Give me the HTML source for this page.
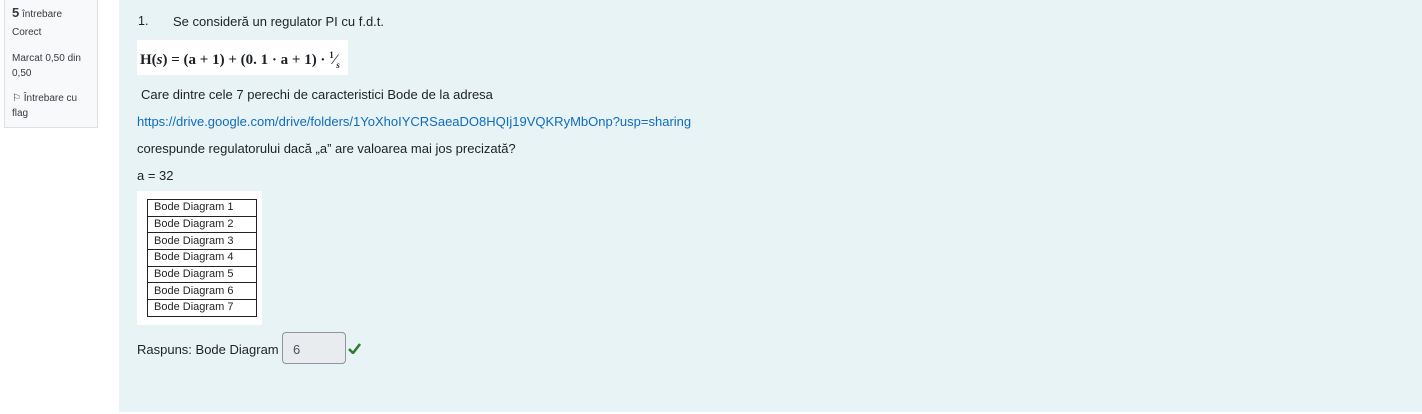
<!DOCTYPE html>
<html><head><meta charset="utf-8"><style>
body{margin:0;width:1422px;height:414px;background:#fff;font-family:"Liberation Sans",sans-serif;font-size:12.5px;color:#1d2125;position:relative;overflow:hidden}
.side{position:absolute;left:4px;top:-1px;width:92px;height:127px;background:#f8f9fa;border:1px solid #dee2e6;font-size:10px;color:#343a40}
.side div{position:absolute;left:7px}
.main{position:absolute;left:119px;top:0;width:1303px;height:412px;background:#e7f3f5}
.t{position:absolute;white-space:nowrap}
.img{position:absolute;background:#fff}
table{position:absolute;left:10px;top:8px;border-collapse:collapse;font-family:"Liberation Sans",sans-serif;font-size:11px;width:110px;table-layout:fixed}
td{border:1px solid #222;height:16.7px;padding:0 0 0 6px;line-height:15px;box-sizing:border-box;white-space:nowrap;overflow:hidden}
</style></head><body>
<div class="side">
<div style="top:5px"><b style="font-size:13px">5</b> întrebare</div>
<div style="top:27px">Corect</div>
<div style="top:51px;line-height:15px">Marcat 0,50 din<br>0,50</div>
<div style="top:91px;line-height:15px">⚐ Întrebare cu<br>flag</div>
</div>
<div class="main">
<div class="t" style="left:19px;top:14px">1.</div>
<div class="t" style="left:54px;top:14px;font-size:13px">Se consideră un regulator PI cu f.d.t.</div>
<div class="img" style="left:18px;top:40px;width:211px;height:35px"><span class="t" style="left:3px;top:10px;font-family:'Liberation Serif',serif;font-weight:bold;font-size:15px">H(<i>s</i>) = (a + 1) + (0. 1 · a + 1) · <sup style="font-size:9px">1</sup>⁄<sub style="font-size:9px"><i>s</i></sub></span></div>
<div class="t" style="left:22px;top:87px;font-size:13px">Care dintre cele 7 perechi de caracteristici Bode de la adresa</div>
<div class="t" style="left:18px;top:114px;color:#0f6cbf;font-size:13px">https://drive.google.com/drive/folders/1YoXhoIYCRSaeaDO8HQIj19VQKRyMbOnp?usp=sharing</div>
<div class="t" style="left:18px;top:141px;font-size:13px">corespunde regulatorului dacă „a” are valoarea mai jos precizată?</div>
<div class="t" style="left:18px;top:168px;font-size:13px">a = 32</div>
<div class="img" style="left:18px;top:191px;width:125px;height:134px">
<table><tr><td>Bode Diagram 1</td></tr><tr><td>Bode Diagram 2</td></tr><tr><td>Bode Diagram 3</td></tr><tr><td>Bode Diagram 4</td></tr><tr><td>Bode Diagram 5</td></tr><tr><td>Bode Diagram 6</td></tr><tr><td>Bode Diagram 7</td></tr></table></div>
<div class="t" style="left:18px;top:342px;font-size:13px">Raspuns: Bode Diagram</div>
<div style="position:absolute;left:163px;top:332px;width:64px;height:32px;box-sizing:border-box;border:1px solid #8f959e;border-radius:4px;background:#e9ecef"><span class="t" style="left:10px;top:9px;color:#495057;font-size:13px">6</span></div>
<svg style="position:absolute;left:229px;top:343px" width="13" height="11" viewBox="0 0 13 11"><path d="M1 6l4 4 7-9" stroke="#357a32" stroke-width="2.6" fill="none"/></svg>
</div>
</body></html>
